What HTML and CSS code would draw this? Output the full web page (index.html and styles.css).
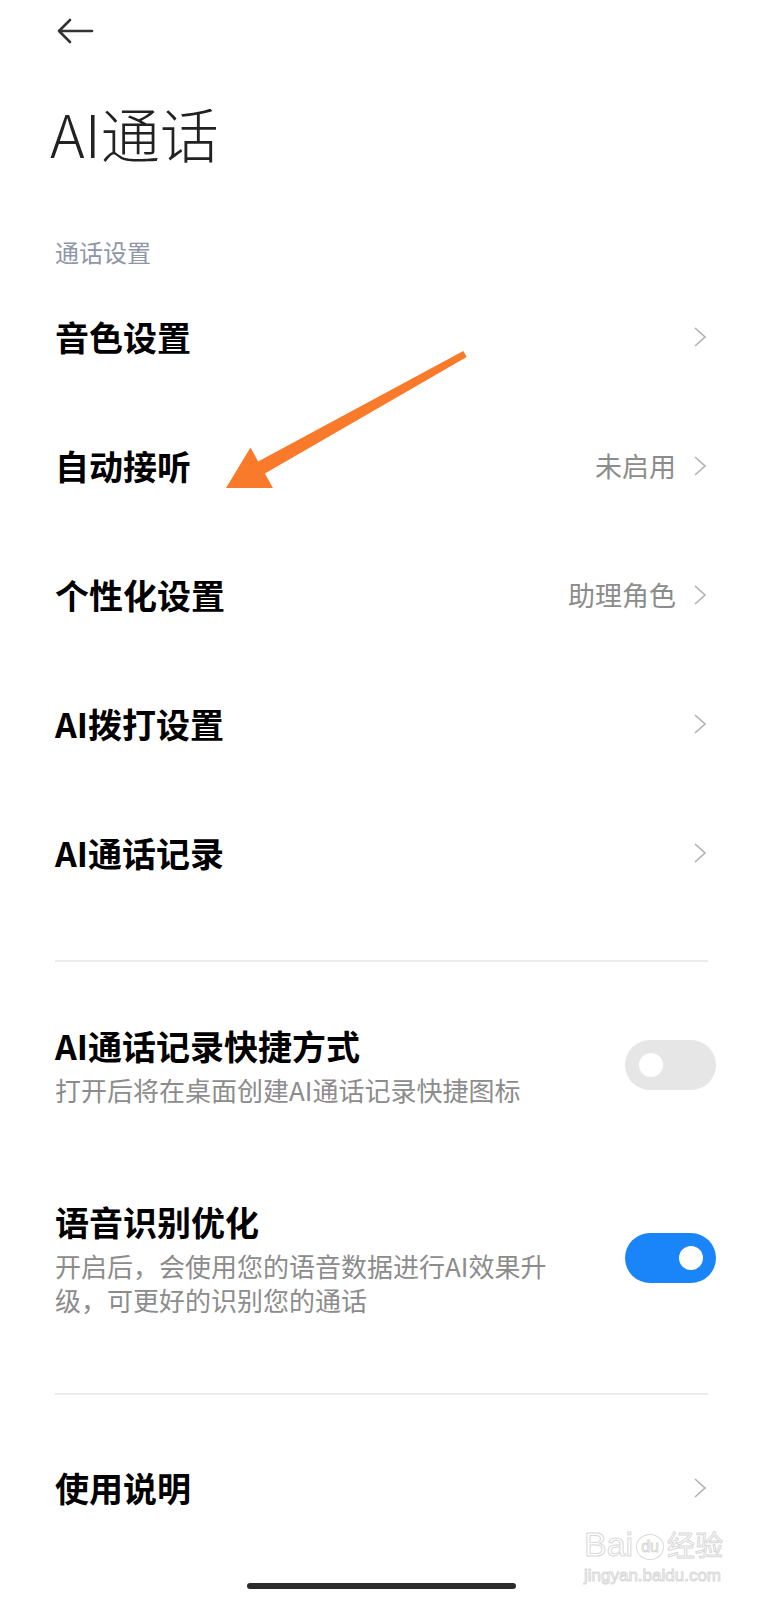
FILE: index.html
```html
<!DOCTYPE html>
<html lang="zh-CN">
<head>
    <meta charset="UTF-8">
    <meta name="viewport" content="width=device-width, initial-scale=1.0">
    <title>AI通话</title>
    <link rel="stylesheet" href="styles.css">
</head>
<body>
    <div class="topbar">
        <svg class="back" width="38" height="26" viewBox="0 0 38 26">
            <path d="M3 13 H36 M14 2 L3 13 L14 24" fill="none" stroke="#333" stroke-width="2.6" stroke-linecap="round" stroke-linejoin="round"/>
        </svg>
    </div>

    <h1 class="title">AI通话</h1>

    <div class="section-label">通话设置</div>

    <div class="row">
        <span class="row-title">音色设置</span>
        <svg class="chevron" width="14" height="22" viewBox="0 0 14 22"><polyline points="2,2 12,11 2,20" fill="none" stroke="#b0b0b0" stroke-width="1.6"/></svg>
    </div>
    <div class="row">
        <span class="row-title">自动接听</span>
        <span class="row-value">未启用</span>
        <svg class="chevron" width="14" height="22" viewBox="0 0 14 22"><polyline points="2,2 12,11 2,20" fill="none" stroke="#b0b0b0" stroke-width="1.6"/></svg>
    </div>
    <div class="row">
        <span class="row-title">个性化设置</span>
        <span class="row-value">助理角色</span>
        <svg class="chevron" width="14" height="22" viewBox="0 0 14 22"><polyline points="2,2 12,11 2,20" fill="none" stroke="#b0b0b0" stroke-width="1.6"/></svg>
    </div>
    <div class="row">
        <span class="row-title">AI拨打设置</span>
        <svg class="chevron" width="14" height="22" viewBox="0 0 14 22"><polyline points="2,2 12,11 2,20" fill="none" stroke="#b0b0b0" stroke-width="1.6"/></svg>
    </div>
    <div class="row">
        <span class="row-title">AI通话记录</span>
        <svg class="chevron" width="14" height="22" viewBox="0 0 14 22"><polyline points="2,2 12,11 2,20" fill="none" stroke="#b0b0b0" stroke-width="1.6"/></svg>
    </div>

    <div class="divider"></div>

    <div class="switch-row">
        <div class="switch-text">
            <div class="switch-title">AI通话记录快捷方式</div>
            <div class="switch-sub">打开后将在桌面创建AI通话记录快捷图标</div>
        </div>
        <div class="switch"><span class="knob"></span></div>
    </div>
    <div class="switch-row">
        <div class="switch-text">
            <div class="switch-title">语音识别优化</div>
            <div class="switch-sub">开启后，会使用您的语音数据进行AI效果升级，可更好的识别您的通话</div>
        </div>
        <div class="switch on"><span class="knob"></span></div>
    </div>

    <div class="divider divider-bottom"></div>

    <div class="row">
        <span class="row-title">使用说明</span>
        <svg class="chevron" width="14" height="22" viewBox="0 0 14 22"><polyline points="2,2 12,11 2,20" fill="none" stroke="#b0b0b0" stroke-width="1.6"/></svg>
    </div>

    <div class="home-bar"></div>

    <!-- annotation arrow drawn over the list -->
    <svg class="pointer" width="260" height="150" viewBox="0 0 260 150">
        <polygon points="243.3,5.9 246.7,12.1 44.9,128.6 53,143 6,143 30.5,102.4 38.1,116.4" fill="#fa7a2c"/>
    </svg>

    <div class="watermark">
        <div class="wm-line">Bai<span class="wm-paw">du</span><span class="wm-cn">经验</span></div>
        <div class="wm-url">jingyan.baidu.com</div>
    </div>
</body>
</html>
```

FILE: styles.css
```css
body {
    margin: 0;
    padding: 0;
    height: 1600px;
    overflow: hidden;
    position: relative;
    background-color: #fff;
    font-family: "Noto Sans CJK SC", "Noto Sans", sans-serif;
    color: #000;
}
.topbar {
    height: 62px;
    box-sizing: border-box;
    padding: 18px 0 0 56px;
}
.back {
    display: block;
}
.title {
    margin: 36px 0 0 50px;
    font-size: 59px;
    line-height: 70px;
    font-weight: 300;
    color: #222;
}
.section-label {
    margin: 66px 0 0 55px;
    padding-bottom: 4.5px;
    font-size: 24px;
    line-height: 36px;
    color: #8e96a8;
}
.row {
    height: 129px;
    box-sizing: border-box;
    display: flex;
    align-items: center;
    padding: 0 56px 5px 55px;
}
.row-title {
    flex: 1;
    font-size: 34px;
    font-weight: 700;
}
.row-value {
    font-size: 27px;
    color: #8c8c8c;
    margin-right: 17px;
}
.chevron {
    display: block;
}
.divider {
    height: 2px;
    background-color: #ececec;
    margin: 40px 55px 15px;
}
.divider-bottom {
    margin: 30px 55px 31px;
}
.switch-row {
    display: flex;
    align-items: center;
    padding: 46px 47px 46px 55px;
}
.switch-text {
    width: 510px;
}
.switch-title {
    font-size: 34px;
    line-height: 46px;
    font-weight: 700;
}
.switch-sub {
    margin-top: 4px;
    font-size: 26px;
    line-height: 34px;
    color: #8c8c8c;
}
.switch {
    margin-left: auto;
    width: 91px;
    height: 50px;
    border-radius: 25px;
    background-color: #e6e6e6;
    display: flex;
    align-items: center;
    padding: 0 13px 0 14px;
    box-sizing: border-box;
}
.switch.on {
    background-color: #1a85f8;
    justify-content: flex-end;
}
.knob {
    width: 24px;
    height: 24px;
    border-radius: 50%;
    background-color: #fff;
}
.home-bar {
    width: 269px;
    height: 6px;
    border-radius: 3px;
    background-color: #2b2b2b;
    margin: 28.5px auto 0;
}
.pointer {
    position: absolute;
    left: 220px;
    top: 345px;
}
.watermark {
    position: absolute;
    left: 584px;
    top: 1522px;
    color: transparent;
    -webkit-text-stroke: 1px #d9d9d9;
    font-family: "Liberation Sans", "Noto Sans CJK SC", sans-serif;
}
.wm-line {
    font-size: 34px;
    line-height: 44px;
    white-space: nowrap;
}
.wm-paw {
    display: inline-block;
    font-size: 16px;
    line-height: 20px;
    border: 1.5px solid #d9d9d9;
    border-radius: 50%;
    padding: 2px 4px;
    margin: 0 3px;
    vertical-align: middle;
}
.wm-cn {
    font-size: 28px;
    font-family: "Noto Sans CJK SC", sans-serif;
}
.wm-url {
    font-size: 17px;
    line-height: 20px;
}
```
